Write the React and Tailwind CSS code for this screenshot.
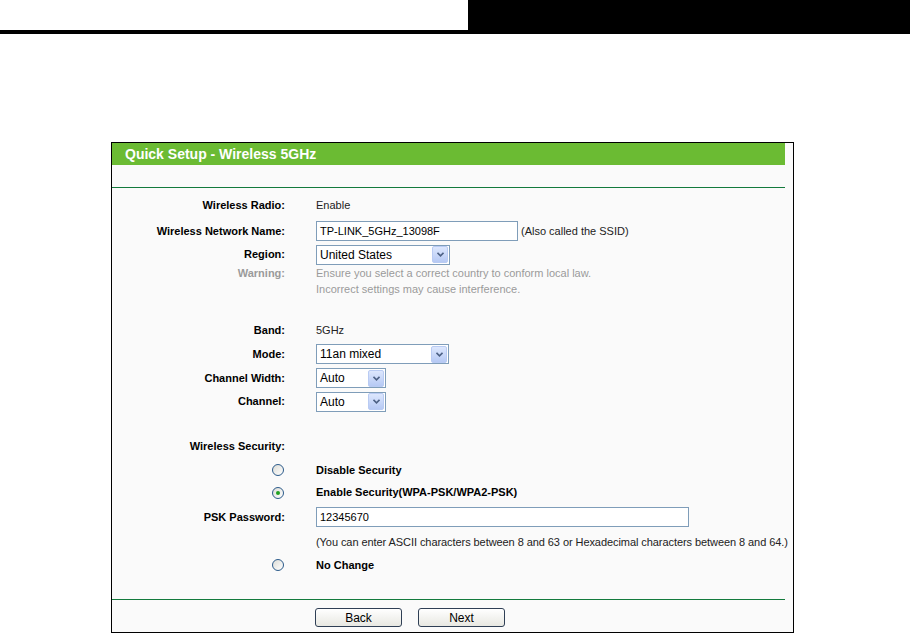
import React from 'react';

const Row = ({ label, h, muted, children, labelSide }) => (
  <div className={`grid grid-cols-[173px_1fr] gap-x-[31px] items-center ${h}`}>
    <div className={`text-right font-bold ${muted ? 'text-[#9a9a9a]' : 'text-black'}`}>
      {labelSide || label}
    </div>
    <div className="flex items-center text-[#222]">{children}</div>
  </div>
);

const Chevron = () => (
  <span className="w-[16px] h-[17px] border border-[#b9cbf3] rounded-[2px] bg-gradient-to-b from-[#dde7fd] to-[#b6c9f4] flex items-center justify-center">
    <svg width="7" height="5" viewBox="0 0 7 5">
      <path d="M0.5 0.8 L3.5 3.8 L6.5 0.8" fill="none" stroke="#4d6185" strokeWidth="1.6" />
    </svg>
  </span>
);

const Select = ({ value, w }) => (
  <div className={`${w} h-[20px] border border-[#7f9db9] bg-white flex items-center justify-between pl-[3px] pr-[1px] text-[12px] text-black`}>
    <span>{value}</span>
    <Chevron />
  </div>
);

const Radio = ({ checked }) => (
  <span className="mr-[1px] w-[12px] h-[12px] rounded-full border border-[#2b5a8a] bg-gradient-to-br from-[#dcdcd6] to-white flex items-center justify-center">
    {checked && <span className="w-[4px] h-[4px] rounded-full bg-[#21a121]" />}
  </span>
);

export default function App() {
  return (
    <div className="w-[910px] h-[634px] bg-white overflow-hidden font-['Liberation_Sans',Arial,sans-serif] text-[11px] leading-none">
      <div className="flex h-[34px]">
        <div className="flex-1 border-b-4 border-black" />
        <div className="w-[442px] bg-black" />
      </div>

      <div className="ml-[111px] mt-[108px] w-[683px] border border-black bg-[#fafafa] pb-[5px]">
        <div className="mr-[8px] h-[22px] bg-[#6bbb33] pl-[13px] flex items-center text-white font-bold text-[14px]">
          Quick Setup - Wireless 5GHz
        </div>
        <div className="h-[22px]" />
        <div className="mr-[8px] h-px bg-[#137a3c]" />
        <div className="h-[5px]" />

        <Row label="Wireless Radio:" h="h-[25px]">Enable</Row>
        <Row label="Wireless Network Name:" h="h-[26px]">
          <div className="w-[202px] h-[20px] border border-[#7f9db9] bg-white flex items-center pl-[3px] text-black">
            TP-LINK_5GHz_13098F
          </div>
          <span className="ml-[3px]">(Also called the SSID)</span>
        </Row>
        <Row label="Region:" h="h-[21px]">
          <Select value="United States" w="w-[134px]" />
        </Row>
        <div className="grid grid-cols-[173px_1fr] gap-x-[31px] leading-[16px] text-[#9a9a9a]">
          <div className="text-right font-bold">Warning:</div>
          <div>
            <div>Ensure you select a correct country to conform local law.</div>
            <div>Incorrect settings may cause interference.</div>
          </div>
        </div>
        <div className="h-[21px]" />

        <Row label="Band:" h="h-[24px]">5GHz</Row>
        <Row label="Mode:" h="h-[24px]">
          <Select value="11an mixed" w="w-[133px]" />
        </Row>
        <Row label="Channel Width:" h="h-[24px]">
          <Select value="Auto" w="w-[70px]" />
        </Row>
        <Row label="Channel:" h="h-[23px]">
          <Select value="Auto" w="w-[70px]" />
        </Row>
        <div className="h-[21px]" />

        <Row label="Wireless Security:" h="h-[24px]" />
        <div className="grid grid-cols-[173px_1fr] gap-x-[31px] items-center h-[24px]">
          <div className="flex justify-end"><Radio /></div>
          <div className="font-bold text-black">Disable Security</div>
        </div>
        <div className="grid grid-cols-[173px_1fr] gap-x-[31px] items-center h-[21px]">
          <div className="flex justify-end"><Radio checked /></div>
          <div className="font-bold text-black">Enable Security(WPA-PSK/WPA2-PSK)</div>
        </div>
        <Row label="PSK Password:" h="h-[28px]">
          <div className="w-[373px] h-[20px] border border-[#7f9db9] bg-white flex items-center pl-[3px] text-black">
            12345670
          </div>
        </Row>
        <div className="grid grid-cols-[173px_1fr] gap-x-[31px] items-center h-[22px]">
          <div />
          <div className="text-[#222] whitespace-nowrap tracking-[-0.07px]">
            (You can enter ASCII characters between 8 and 63 or Hexadecimal characters between 8 and 64.)
          </div>
        </div>
        <div className="grid grid-cols-[173px_1fr] gap-x-[31px] items-center h-[24px]">
          <div className="flex justify-end"><Radio /></div>
          <div className="font-bold text-black">No Change</div>
        </div>
        <div className="h-[22px]" />

        <div className="mr-[8px] h-px bg-[#137a3c]" />
        <div className="flex gap-[16px] pl-[203px] pt-[8px]">
          <button className="w-[87px] h-[19px] border border-[#2f3f55] rounded-[3px] bg-gradient-to-b from-white to-[#e8e8e2] text-[12px] text-black leading-none">
            Back
          </button>
          <button className="w-[87px] h-[19px] border border-[#2f3f55] rounded-[3px] bg-gradient-to-b from-white to-[#e8e8e2] text-[12px] text-black leading-none">
            Next
          </button>
        </div>
      </div>
    </div>
  );
}
